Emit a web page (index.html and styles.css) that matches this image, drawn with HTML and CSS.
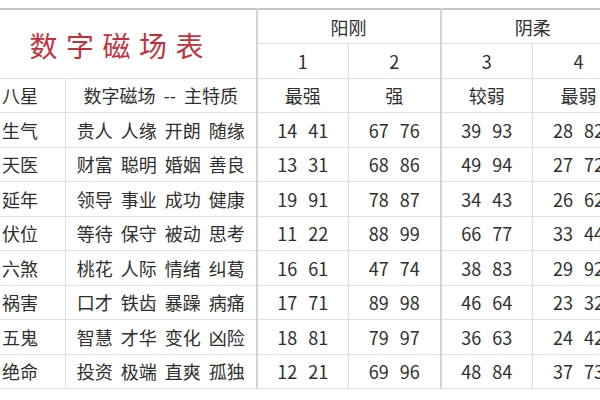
FILE: index.html
```html
<!DOCTYPE html>
<html lang="zh-CN">
<head>
<meta charset="utf-8">
<title>数字磁场表</title>
<link rel="stylesheet" href="styles.css">
</head>
<body>
<div class="sheet">
  <table class="grid">
    <colgroup>
      <col class="c-star">
      <col class="c-trait">
      <col class="c-num">
      <col class="c-num">
      <col class="c-num">
      <col class="c-num">
    </colgroup>
    <tr class="r">
      <td class="title sep-r" colspan="2" rowspan="2">数字磁场表</td>
      <td class="sep-r" colspan="2">阳刚</td>
      <td colspan="2">阴柔</td>
    </tr>
    <tr class="r">
      <td>1</td><td class="sep-r">2</td><td>3</td><td>4</td>
    </tr>
    <tr class="r">
      <td class="star">八星</td><td class="trait sep-r">数字磁场 -- 主特质</td>
      <td>最强</td><td class="sep-r">强</td><td>较弱</td><td>最弱</td>
    </tr>
    <tr class="r">
      <td class="star">生气</td><td class="trait sep-r">贵人 人缘 开朗 随缘</td>
      <td class="num">14 41</td><td class="num sep-r">67 76</td><td class="num">39 93</td><td class="num">28 82</td>
    </tr>
    <tr class="r">
      <td class="star">天医</td><td class="trait sep-r">财富 聪明 婚姻 善良</td>
      <td class="num">13 31</td><td class="num sep-r">68 86</td><td class="num">49 94</td><td class="num">27 72</td>
    </tr>
    <tr class="r">
      <td class="star">延年</td><td class="trait sep-r">领导 事业 成功 健康</td>
      <td class="num">19 91</td><td class="num sep-r">78 87</td><td class="num">34 43</td><td class="num">26 62</td>
    </tr>
    <tr class="r">
      <td class="star">伏位</td><td class="trait sep-r">等待 保守 被动 思考</td>
      <td class="num">11 22</td><td class="num sep-r">88 99</td><td class="num">66 77</td><td class="num">33 44</td>
    </tr>
    <tr class="r">
      <td class="star">六煞</td><td class="trait sep-r">桃花 人际 情绪 纠葛</td>
      <td class="num">16 61</td><td class="num sep-r">47 74</td><td class="num">38 83</td><td class="num">29 92</td>
    </tr>
    <tr class="r">
      <td class="star">祸害</td><td class="trait sep-r">口才 铁齿 暴躁 病痛</td>
      <td class="num">17 71</td><td class="num sep-r">89 98</td><td class="num">46 64</td><td class="num">23 32</td>
    </tr>
    <tr class="r">
      <td class="star">五鬼</td><td class="trait sep-r">智慧 才华 变化 凶险</td>
      <td class="num">18 81</td><td class="num sep-r">79 97</td><td class="num">36 63</td><td class="num">24 42</td>
    </tr>
    <tr class="r">
      <td class="star">绝命</td><td class="trait sep-r">投资 极端 直爽 孤独</td>
      <td class="num">12 21</td><td class="num sep-r">69 96</td><td class="num">48 84</td><td class="num">37 73</td>
    </tr>
  </table>
</div>
</body>
</html>
```

FILE: styles.css
```css
html, body {
  margin: 0;
  padding: 0;
  background: #ffffff;
  overflow: hidden;
}

.sheet {
  width: 651px;
  margin-left: -26px;
  padding-top: 8px;
}

.grid {
  width: 651px;
  table-layout: fixed;
  border-collapse: collapse;
  border-top: 2px solid #c6c6c6;
  border-bottom: 1px solid #dadada;
  font-family: "Noto Sans CJK SC", "Microsoft YaHei", sans-serif;
  font-size: 18px;
  color: #2f2f2f;
}

.c-star { width: 91px; }
.c-trait { width: 191px; }
.c-num { width: 92px; }

.r { height: 34.5px; }

.grid td {
  border: 1px solid #e0e0e0;
  padding: 0;
  text-align: center;
  vertical-align: middle;
  line-height: 1;
  white-space: nowrap;
}

.grid td.sep-r {
  border-right: 2px solid #d4d4d4;
}

.grid td.title {
  color: #c3313d;
  font-size: 28px;
  letter-spacing: 8.5px;
  padding: 2px 0 0 11px;
}

.trait {
  word-spacing: 4px;
}

.num {
  word-spacing: 7px;
}
```
